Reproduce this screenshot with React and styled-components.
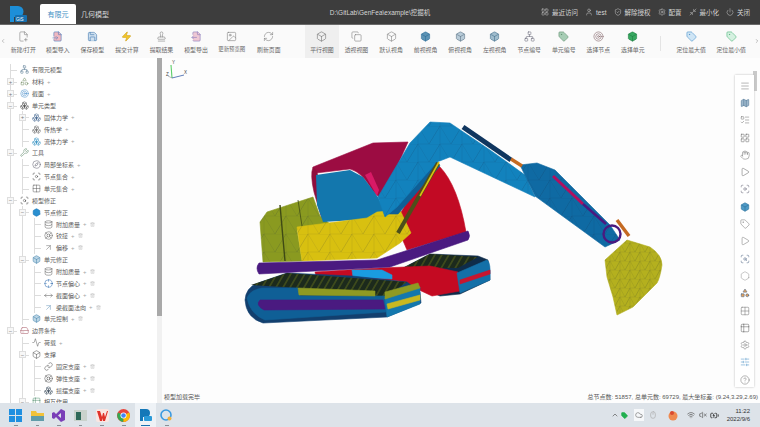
import styled, { createGlobalStyle } from "styled-components";
import {
  Activity, ArrowUpRight, BatteryCharging, Box, Boxes, ChevronLeft, ChevronRight, ChevronUp, CircleHelp, Cloud,
  Compass, Copy, Crosshair, Database, FileInput, FileOutput, FilePlus2, Focus, Grid2x2, Hand, HardDrive, Hexagon,
  Image, LayoutGrid, LifeBuoy, Link, ListTodo, Map, Menu, Minimize2, Mouse, MoveHorizontal, Network, Play, Power,
  RefreshCw, Save, ScanSearch, Settings, Shapes, ShieldCheck, SlidersHorizontal, Stamp, Table2, Tag, Target,
  Trash2, User, VolumeX, Wifi, Wrench, Zap,
} from "lucide-react";

const GlobalStyle = createGlobalStyle`
  html, body, #root { margin: 0; width: 100%; height: 100%; overflow: hidden; }
  body { font-family: "Liberation Sans", "Noto Sans CJK SC", sans-serif; }
  * { box-sizing: border-box; }
`;

const Page = styled.div`
  width: 760px;
  height: 427px;
  display: flex;
  flex-direction: column;
  background: #fff;
  color: #555;
`;

const Header = styled.div`
  height: 25px;
  flex: none;
  display: grid;
  grid-template-columns: minmax(0, 1fr) auto minmax(0, 1fr);
  align-items: center;
  background: #3d3d3d;
  border-bottom: 1px solid #6a6a6a;
  color: #d6d6d6;
  font-size: 6.5px;
`;

const HeaderLeft = styled.div`
  height: 100%;
  display: flex;
  align-items: flex-end;
  padding-left: 9px;
`;

const Logo = styled.svg`
  width: 18px;
  height: 19px;
  margin: 0 13px 1px 0;
`;

const Tab = styled.div`
  width: ${(p) => (p.$active ? "36px" : "38px")};
  height: 20px;
  display: flex;
  align-items: center;
  justify-content: center;
  font-size: 7px;
  border-radius: 2px 2px 0 0;
  background: ${(p) => (p.$active ? "#fff" : "transparent")};
  color: ${(p) => (p.$active ? "#3f8fc4" : "#d8d8d8")};
`;

const HeaderRight = styled.div`
  display: flex;
  justify-content: flex-end;
  align-items: center;
  gap: 7px;
  padding-right: 10px;
`;

const HeaderItem = styled.div`
  display: flex;
  align-items: center;
  gap: 3px;
  white-space: nowrap;
`;

const Toolbar = styled.div`
  height: 33px;
  flex: none;
  display: flex;
  align-items: stretch;
  background: #fafafa;
`;

const Chevron = styled.div`
  width: 6px;
  display: flex;
  align-items: center;
  justify-content: center;
  color: #666;
  flex: none;
  margin-bottom: 2px;
`;

const ToolGroup = styled.div`
  flex: 1;
  display: flex;
`;

const ToolItem = styled.div`
  width: ${(p) => p.$width || 34.55}px;
  margin-left: ${(p) => p.$gap || 0}px;
  flex: none;
  display: flex;
  flex-direction: column;
  align-items: center;
  padding-top: 6px;
  gap: 3px;
  font-size: ${(p) => (p.$small ? "5.4px" : "5.9px")};
  color: #666;
  white-space: nowrap;
  background: ${(p) => (p.$active ? "#efefef" : "transparent")};
`;

const ToolDivider = styled.div`
  width: 1px;
  height: 15px;
  margin: 11px 10px 0 10px;
  background: #e4e4e4;
`;

const Main = styled.div`
  flex: 1;
  min-height: 0;
  display: flex;
`;

const Sidebar = styled.div`
  width: 157px;
  flex: none;
  padding: 6px 0 0 5px;
  overflow: hidden;
  background: #fff;
`;

const TreeRow = styled.div`
  height: 11.87px;
  display: flex;
  align-items: stretch;
  font-size: 6px;
  white-space: nowrap;
  color: #5c5c5c;
`;

const Guide = styled.div`
  width: 12px;
  flex: none;
  position: relative;
  &::before {
    content: "";
    position: absolute;
    left: 5px;
    top: 0;
    bottom: 0;
    border-left: 1px solid #dcdcdc;
  }
`;

const Expander = styled(Guide)`
  display: flex;
  align-items: center;
  &::after {
    content: "";
    position: absolute;
    left: 6px;
    right: 0;
    top: 50%;
    border-top: 1px solid #dcdcdc;
  }
`;

const ExpanderBox = styled.div`
  position: relative;
  z-index: 1;
  width: 7px;
  height: 7px;
  margin-left: 2px;
  display: flex;
  align-items: center;
  justify-content: center;
  background: #f7f7f7;
  border: 1px solid #dedede;
  font-size: 6px;
  line-height: 1;
  color: #777;
`;

const TreeIcon = styled.div`
  width: 9px;
  flex: none;
  margin: 0 3px;
  display: flex;
  align-items: center;
  justify-content: center;
`;

const TreeLabel = styled.div`
  display: flex;
  align-items: center;
  gap: 3px;
`;

const Muted = styled.span`
  display: inline-flex;
  color: #a5a5a5;
`;

const SideScroll = styled.div`
  width: 5px;
  flex: none;
  background: #f1f1f1;
  &::before {
    content: "";
    display: block;
    height: 258px;
    background: #a9a9a9;
  }
`;

const Viewport = styled.div`
  flex: 1;
  min-width: 0;
  position: relative;
  display: flex;
  flex-direction: column;
  background: #fdfdfd;
`;

const Scene = styled.svg`
  flex: 1;
  min-height: 0;
  display: block;
`;

const StatusBar = styled.div`
  height: 13px;
  flex: none;
  display: flex;
  justify-content: space-between;
  align-items: center;
  padding: 0 2px;
  font-size: 6px;
  color: #555;
`;

const SideTools = styled.div`
  position: absolute;
  top: 17px;
  right: 6px;
  width: 19px;
  height: 312px;
  display: flex;
  flex-direction: column;
  align-items: center;
  padding-top: 2px;
  background: #fff;
  box-shadow: 0 0 2px #bbb;
`;

const SideTool = styled.div`
  height: 17.3px;
  flex: none;
  display: flex;
  align-items: center;
  justify-content: center;
`;

const SideGrip = styled.div`
  position: absolute;
  top: 13px;
  right: 3px;
  width: 4px;
  height: 20px;
  background: #c9c9c9;
`;

const Taskbar = styled.div`
  height: 24px;
  flex: none;
  display: flex;
  justify-content: space-between;
  align-items: center;
  background: #dde3e9;
`;

const TaskApps = styled.div`
  display: flex;
  padding-left: 5px;
`;

const TaskApp = styled.div`
  width: 21.6px;
  height: 24px;
  display: flex;
  align-items: center;
  justify-content: center;
  position: relative;
  background: ${(p) => (p.$active ? "#eef2f6" : "transparent")};
  &::after {
    content: "";
    position: absolute;
    bottom: 1px;
    left: ${(p) => (p.$active ? "6px" : "9px")};
    right: ${(p) => (p.$active ? "6px" : "9px")};
    height: 1px;
    background: ${(p) => (p.$active ? "#1a6fb0" : "#8a8f96")};
  }
`;

const Tray = styled.div`
  display: flex;
  align-items: center;
  padding-right: 10px;
`;

const TrayIcon = styled.div`
  width: 10px;
  height: 12px;
  display: flex;
  align-items: center;
  justify-content: center;
  margin-right: ${(p) => p.$after || 0}px;
  background: ${(p) => (p.$boxed ? "#f6f8fa" : "transparent")};
`;

const Clock = styled.div`
  margin-left: 7px;
  text-align: right;
  font-size: 6px;
  line-height: 8px;
  color: #333;
`;

const toolsA = [
  { label: "新建/打开", Icon: FilePlus2, color: "#777" },
  { label: "模型导入", Icon: FileInput, color: "#3a72b8", fill: "#f0b8c0" },
  { label: "保存模型", Icon: Save, color: "#2f6da8", fill: "#cfe0ef" },
  { label: "提交计算", Icon: Zap, color: "#c99a12", fill: "#f2c62c" },
  { label: "提取结果", Icon: Stamp, color: "#777" },
  { label: "模型导出", Icon: FileOutput, color: "#7d6fb8", fill: "#eec8d4" },
  { label: "更新预览图", Icon: Image, color: "#777", small: true, width: 37 },
  { label: "刷新页面", Icon: RefreshCw, color: "#777", width: 37 },
  { label: "平行视图", Icon: Box, color: "#666", active: true, gap: 17.4 },
  { label: "透视视图", Icon: Copy, color: "#777" },
  { label: "默认视角", Icon: Box, color: "#777" },
  { label: "前视视角", Icon: Box, color: "#2b6d96", fill: "#5d93b5" },
  { label: "俯视视角", Icon: Box, color: "#566e80", fill: "#b8cbd8" },
  { label: "左视视角", Icon: Box, color: "#3f6b88", fill: "#9fbccd" },
  { label: "节点编号", Icon: Network, color: "#667" },
  { label: "单元编号", Icon: Tag, color: "#5b8a6a", fill: "#a7cdb5" },
  { label: "选择节点", Icon: Target, color: "#7a5a60" },
  { label: "选择单元", Icon: Box, color: "#1d7a40", fill: "#37a860" },
];

const toolsB = [
  { label: "定位最大值", Icon: Tag, color: "#3a8ac8", fill: "#cfe5f5" },
  { label: "定位最小值", Icon: Tag, color: "#3eb070", fill: "#d5f0e0" },
];

const headerItems = [
  { label: "最近访问", Icon: LayoutGrid },
  { label: "test", Icon: User },
  { label: "解除授权", Icon: ShieldCheck },
  { label: "配置", Icon: Settings },
  { label: "最小化", Icon: Minimize2 },
  { label: "关闭", Icon: Power },
];

// depth, expander ("+", "-" or none), extras: 1 plus, 2 plus and trash
const tree = [
  { d: 0, label: "有限元模型", Icon: Network, color: "#4b6f8a" },
  { d: 0, ex: "+", label: "材料", extra: 1, Icon: Shapes, color: "#5f7d4e" },
  { d: 0, ex: "+", label: "截面", extra: 1, Icon: Target, color: "#3d86c6" },
  { d: 0, ex: "-", label: "单元类型", Icon: Boxes, color: "#444" },
  { d: 1, ex: "+", label: "固体力学", extra: 1, Icon: Boxes, color: "#3a5f8a" },
  { d: 1, label: "传热学", extra: 1, Icon: Boxes, color: "#666" },
  { d: 1, label: "流体力学", extra: 1, Icon: Boxes, color: "#2f8fc0" },
  { d: 0, ex: "-", label: "工具", Icon: Wrench, color: "#4d7a5a" },
  { d: 1, label: "局部坐标系", extra: 1, Icon: Compass, color: "#556" },
  { d: 1, label: "节点集合", extra: 1, Icon: Focus, color: "#444" },
  { d: 1, label: "单元集合", extra: 1, Icon: Grid2x2, color: "#555" },
  { d: 0, ex: "-", label: "模型修正", Icon: ScanSearch, color: "#444" },
  { d: 1, ex: "-", label: "节点修正", Icon: Hexagon, color: "#2178b5", fill: "#2a8fd0" },
  { d: 2, label: "附加质量", extra: 2, Icon: Database, color: "#555" },
  { d: 2, label: "铰接", extra: 2, Icon: LifeBuoy, color: "#555" },
  { d: 2, label: "偏移", extra: 2, Icon: ArrowUpRight, color: "#666" },
  { d: 1, ex: "-", label: "单元修正", Icon: Box, color: "#3f7fa8", fill: "#bcd6e6" },
  { d: 2, label: "附加质量", extra: 2, Icon: Database, color: "#555" },
  { d: 2, label: "节点偏心", extra: 2, Icon: Crosshair, color: "#1f5fa8" },
  { d: 2, label: "截面偏心", extra: 2, Icon: MoveHorizontal, color: "#555" },
  { d: 2, label: "梁截面法向", extra: 2, Icon: ArrowUpRight, color: "#5f8fb5" },
  { d: 1, label: "单元控制", extra: 2, Icon: Box, color: "#3f7fa8", fill: "#bcd6e6" },
  { d: 0, ex: "-", label: "边界条件", Icon: HardDrive, color: "#a04a5a" },
  { d: 1, label: "荷载", extra: 1, Icon: Activity, color: "#555" },
  { d: 1, ex: "-", label: "支撑", Icon: Box, color: "#444" },
  { d: 2, label: "固定支座", extra: 2, Icon: Link, color: "#444" },
  { d: 2, label: "弹性支座", extra: 2, Icon: LifeBuoy, color: "#444" },
  { d: 2, label: "摇摆支座", extra: 2, Icon: Boxes, color: "#345" },
  { d: 1, ex: "-", label: "相互作用", Icon: Table2, color: "#4d8a6a" },
];

const sideTools = [
  { Icon: Menu, color: "#777" },
  { Icon: Map, color: "#466f92", fill: "#9fb8cc" },
  { Icon: ListTodo, color: "#777" },
  { Icon: LayoutGrid, color: "#666" },
  { Icon: Hand, color: "#777" },
  { Icon: Play, color: "#666" },
  { Icon: Focus, color: "#667" },
  { Icon: Box, color: "#2a6f98", fill: "#4f9ac6" },
  { Icon: Tag, color: "#777" },
  { Icon: Play, color: "#777" },
  { Icon: ScanSearch, color: "#556a88" },
  { Icon: Hexagon, color: "#999" },
  { Icon: Shapes, color: "#3f6590", fill: "#e7a25c" },
  { Icon: Grid2x2, color: "#777" },
  { Icon: Table2, color: "#666" },
  { Icon: Settings, color: "#777" },
  { Icon: SlidersHorizontal, color: "#4f93c8" },
  { Icon: CircleHelp, color: "#777" },
];

// shapes of the model in page pixels; the scene's viewBox starts at the canvas corner
const lowerParts = [
  { fill: "#0f2c4a", d: "M403 268 L430 254 L478 256 L488 260 L490 280 L460 294 L440 296 L403 280Z" },
  { fill: "url(#tread)", d: "M403 268 L430 254 L478 257 L458 268Z" },
  { fill: "#c40a22", d: "M315 272 L380 268 L430 266 L458 272 L460 291 L432 296 L400 281 L316 276Z" },
  { fill: "#1470a8", d: "M457 273 L487 260 Q491 262 490 280 L460 293Z" },
  { fill: "#c8152e", d: "M460 280 L490 270 L490 274 L460 284Z" },
  { fill: "#1a9ce0", d: "M352 270 L382 270 L392 275 L392 279 L353 277Z" },
  { fill: "#123f6e", d: "M245 300 Q246 287 258 283 L287 273 L352 276 L407 282 L420 292 L421 303 L387 317 L263 323 Q246 318 245 300Z" },
  { fill: "url(#tread)", d: "M251 285 L287 273 L407 282 L385 297 L300 288Z" },
  { fill: "#0f5f96", d: "M247 298 Q250 290 262 288 L298 288 L300 296 L385 296 L386 312 L265 320 Q250 314 247 298Z" },
  { fill: "#8f9a22", d: "M298 288 L375 291 L375 296 L299 295Z" },
  { fill: "#4a1a80", d: "M260 300 L383 300 L385 309 L264 310 Q255 305 260 300Z" },
  { fill: "#1377ad", d: "M385 298 L420 287 L420 304 L387 317Z" },
  { fill: "#8f9a22", d: "M385 292 L418 283 L420 288 L385 299Z" },
  { fill: "#c8b820", d: "M387 304 L420 295 L420 300 L388 309Z" },
  { fill: "#c20a24", d: "M430 165 L440 167 Q458 186 466 232 L407 250 L395 222Z" },
  { fill: "#9c0c42", d: "M313 167 L373 143 L408 142 L382 200 L372 190 Q362 172 350 169 L316 173Z" },
  { fill: "#8f0d3c", d: "M313 167 Q310 175 314 192 L322 219 L326 219 L317 172Z" },
  { fill: "#8a9a20", mesh: "mesh", d: "M260 222 L267 212 L313 197 L320 216 L330 224 L297 230 L302 261 L263 262Z" },
];

const upperParts = [
  { fill: "#d8c010", mesh: "mesh", d: "M297 227 L367 218 L377 212 L400 210 L411 233 L400 243 L377 258 L302 261Z" },
  { fill: "#4a1a80", d: "M259 263 L377 260 L468 231 Q471 236 468 240 L390 267 L259 274 Q255 268 259 263Z" },
  { fill: "#0f5f96", d: "M385 214 L437 161 L440 166 L398 214Z" },
  { fill: "#1282bd", mesh: "mesh", d: "M378 197 L410 143 L430 122 L450 123 L490 150 L525 175 L535 197 L450 157 L437 162 L397 207 L385 217Z" },
  { fill: "#0f6aa3", mesh: "mesh", d: "M520 165 L537 163 L555 170 L610 225 L620 240 L605 247 L535 196Z" },
  { fill: "#b4b01e", mesh: "meshFine", d: "M605 260 L627 240 L650 247 Q662 255 662 265 Q660 278 657 283 L633 307 L617 315 L613 297 L607 277Z" },
];

const Part = ({ d, fill, mesh }) => (
  <g>
    <path d={d} fill={fill} stroke={fill.startsWith("url") ? "none" : fill} strokeWidth="0.6" strokeLinejoin="round" />
    {mesh && <path d={d} fill={`url(#${mesh})`} />}
  </g>
);

const Excavator = () => (
  <g>
    <defs>
      <pattern id="mesh" width="22" height="18" patternUnits="userSpaceOnUse">
        <path d="M0 0 L22 0 L11 18 Z M11 18 L22 0 L22 18 M0 0 L0 18 L11 18" fill="none" stroke="#123" strokeOpacity="0.18" strokeWidth="0.4" />
      </pattern>
      <pattern id="meshFine" width="10" height="9" patternUnits="userSpaceOnUse">
        <path d="M0 0 L10 0 L5 9 Z M5 9 L10 0 L10 9 M0 0 L0 9 L5 9" fill="none" stroke="#232" strokeOpacity="0.22" strokeWidth="0.4" />
      </pattern>
      <pattern id="tread" width="7" height="7" patternUnits="userSpaceOnUse" patternTransform="skewX(-30)">
        <rect width="7" height="7" fill="#1c2a1c" />
        <rect width="2" height="7" fill="#3d4a1c" />
      </pattern>
    </defs>
    {lowerParts.map((p, i) => <Part key={i} {...p} />)}
    {/* cab window panel */}
    <polygon points="316,175 350,170 363,177 378,197 388,218 323,222 317,205" fill="#1377ad" />
    <polygon points="365,175 371,172 379,190 377,196" fill="#d81a66" />
    {upperParts.map((p, i) => <Part key={i} {...p} />)}
    <line x1="280" y1="205" x2="285" y2="261" stroke="#3f4a14" strokeWidth="1.4" />
    <line x1="298" y1="200" x2="302" y2="226" stroke="#3f4a14" strokeWidth="0.8" />
    <line x1="438" y1="163" x2="398" y2="233" stroke="#4c4f1a" strokeWidth="4" />
    <line x1="439" y1="162" x2="420" y2="196" stroke="#d8c010" strokeWidth="1.6" />
    <line x1="463" y1="127" x2="511" y2="160" stroke="#10365f" strokeWidth="5" />
    <line x1="511" y1="159" x2="522" y2="166" stroke="#c46a22" strokeWidth="3.4" />
    <line x1="553" y1="176" x2="583" y2="204" stroke="#b01060" strokeWidth="3" />
    <line x1="583" y1="204" x2="606" y2="224" stroke="#4a1a80" strokeWidth="2.6" />
    <circle cx="612" cy="234" r="8.5" fill="none" stroke="#4a1a80" strokeWidth="2.4" />
    <line x1="617" y1="220" x2="629" y2="236" stroke="#c46a22" strokeWidth="3.4" />
  </g>
);

const Axes = () => (
  <g fontSize="4.5" fontFamily="Liberation Sans, sans-serif">
    <line x1="172" y1="78" x2="171" y2="65" stroke="#5ccf6a" strokeWidth="1.1" />
    <line x1="172" y1="78" x2="184" y2="75" stroke="#3a5fa8" strokeWidth="0.8" />
    <line x1="172" y1="78" x2="168" y2="76" stroke="#888" strokeWidth="0.6" />
    <text x="172" y="64" fill="#444">Y</text>
    <text x="184" y="74" fill="#444">X</text>
    <text x="166" y="76" fill="#444">Z</text>
  </g>
);

const TaskIcons = [
  <svg key="win" width="13" height="13" viewBox="0 0 13 13"><path d="M0 0h6v6H0zM7 0h6v6H7zM0 7h6v6H0zM7 7h6v6H7z" fill="#1f8fe0" /></svg>,
  <svg key="dir" width="13" height="13" viewBox="0 0 13 13"><path d="M0 2h5l1 2h7v8H0z" fill="#f2c23a" /><path d="M0 7h13v5H0z" fill="#2f8fd0" opacity=".75" /></svg>,
  <svg key="vs" width="13" height="13" viewBox="0 0 13 13"><path d="M9 0l4 2v9l-4 2-5-5-2 2-2-1V4l2-1 2 2zM9 4L6 6.500 9 9z" fill="#7a3fb8" /></svg>,
  <svg key="app" width="13" height="13" viewBox="0 0 13 13"><path d="M0 1h13v11H0z" fill="#c9d2cc" /><path d="M2 3h5v8H2z" fill="#2f6a5a" /></svg>,
  <svg key="wps" width="13" height="13" viewBox="0 0 13 13"><rect width="13" height="13" rx="2" fill="#fbe6e2" /><path d="M1 2h3l2 6 1-4h1l1 4 2-6h1L9 12H7L6.500 9 6 12H4z" fill="#e0322a" /></svg>,
  <svg key="chrome" width="13" height="13" viewBox="0 0 13 13"><circle cx="6.500" cy="6.500" r="6.500" fill="#e8453c" /><path d="M6.500 6.500L1 3.500A6.500 6.500 0 0 0 6.500 13z" fill="#34a853" /><path d="M6.500 6.500l5.600-3A6.500 6.500 0 0 1 6.500 13z" fill="#fbbc05" /><circle cx="6.500" cy="6.500" r="3" fill="#fff" /><circle cx="6.500" cy="6.500" r="2.300" fill="#4285f4" /></svg>,
  <svg key="pg" width="13" height="14" viewBox="0 0 13 14"><path d="M1 13V1h6a4 4 0 0 1 0 8H4v4z" fill="#1478b8" /><rect x="5" y="8" width="8" height="5" rx="1" fill="#2a9ad8" /></svg>,
  <svg key="chat" width="13" height="13" viewBox="0 0 13 13"><circle cx="6" cy="6" r="5" fill="none" stroke="#3a9ae0" strokeWidth="1.6" /><circle cx="9.500" cy="9.500" r="2" fill="#f0b040" /></svg>,
];

const App = () => (
  <Page>
    <GlobalStyle />
    <Header>
      <HeaderLeft>
        <Logo viewBox="0 0 18 19">
          <path d="M1 18V2h8a5.500 5.500 0 0 1 0 11H5v5z" fill="#1d8fd8" />
          <rect x="6" y="11" width="12" height="7" rx="1" fill="#1670b0" />
          <text x="7" y="16.500" fontSize="4.500" fill="#fff" fontFamily="Liberation Sans, sans-serif">GiS</text>
        </Logo>
        <Tab $active>有限元</Tab>
        <Tab>几何模型</Tab>
      </HeaderLeft>
      <div>D:\GitLab\GenFea\example\挖掘机</div>
      <HeaderRight>
        {headerItems.map(({ label, Icon }) => (
          <HeaderItem key={label}>
            <Icon size={8} strokeWidth={1.4} />
            {label}
          </HeaderItem>
        ))}
      </HeaderRight>
    </Header>

    <Toolbar>
      <Chevron><ChevronLeft size={6} strokeWidth={1.6} /></Chevron>
      <ToolGroup>
        {toolsA.map(({ label, Icon, color, fill, small, active, width, gap }) => (
          <ToolItem key={label} $small={small} $active={active} $width={width} $gap={gap}>
            <Icon size={11} color={color} fill={fill || "none"} strokeWidth={1.2} />
            {label}
          </ToolItem>
        ))}
        <ToolDivider />
        {toolsB.map(({ label, Icon, color, fill }) => (
          <ToolItem key={label} $width={40}>
            <Icon size={11} color={color} fill={fill} strokeWidth={1.2} />
            {label}
          </ToolItem>
        ))}
      </ToolGroup>
      <Chevron><ChevronRight size={6} strokeWidth={1.6} /></Chevron>
    </Toolbar>

    <Main>
      <Sidebar>
        {tree.map((row, i) => (
          <TreeRow key={i}>
            {Array.from({ length: row.d }, (_, g) => <Guide key={g} />)}
            <Expander>
              {row.ex && <ExpanderBox>{row.ex === "+" ? "+" : "−"}</ExpanderBox>}
            </Expander>
            <TreeIcon>
              <row.Icon size={9} color={row.color} fill={row.fill || "none"} strokeWidth={1.3} />
            </TreeIcon>
            <TreeLabel>
              {row.label}
              {row.extra > 0 && <Muted>+</Muted>}
              {row.extra === 2 && <Muted><Trash2 size={5} strokeWidth={1.5} /></Muted>}
            </TreeLabel>
          </TreeRow>
        ))}
      </Sidebar>
      <SideScroll />
      <Viewport>
        <Scene viewBox="162 58 598 332" preserveAspectRatio="xMinYMin slice">
          <Axes />
          <Excavator />
        </Scene>
        <StatusBar>
          <span>模型加载完毕</span>
          <span>总节点数: 51857, 总单元数: 69729, 最大坐标差: (9.24,3.29,2.69)</span>
        </StatusBar>
        <SideGrip />
        <SideTools>
          {sideTools.map(({ Icon, color, fill }, i) => (
            <SideTool key={i}>
              <Icon size={10} color={color} fill={fill || "none"} strokeWidth={1.3} />
            </SideTool>
          ))}
        </SideTools>
      </Viewport>
    </Main>

    <Taskbar>
      <TaskApps>
        {TaskIcons.map((icon, i) => (
          <TaskApp key={i} $active={i === 6}>{icon}</TaskApp>
        ))}
      </TaskApps>
      <Tray>
        <TrayIcon><ChevronUp size={8} color="#555" /></TrayIcon>
        <TrayIcon $after={4}><Tag size={7} color="#22b050" fill="#22b050" /></TrayIcon>
        <TrayIcon $boxed $after={4}><Cloud size={8} color="#777" /></TrayIcon>
        <TrayIcon $after={10}><Mouse size={8} color="#aaa" /></TrayIcon>
        <TrayIcon $after={8}><svg width="10" height="11" viewBox="0 0 10 11"><circle cx="5" cy="6" r="4.500" fill="#ef8a50" /><circle cx="4" cy="3" r="2" fill="#d84a30" /></svg></TrayIcon>
        <TrayIcon $after={2}><Wifi size={8} color="#555" /></TrayIcon>
        <TrayIcon $after={2}><VolumeX size={8} color="#555" /></TrayIcon>
        <TrayIcon><BatteryCharging size={9} color="#222" /></TrayIcon>
        <Clock>
          <div>11:22</div>
          <div>2022/9/6</div>
        </Clock>
      </Tray>
    </Taskbar>
  </Page>
);

export default App;
